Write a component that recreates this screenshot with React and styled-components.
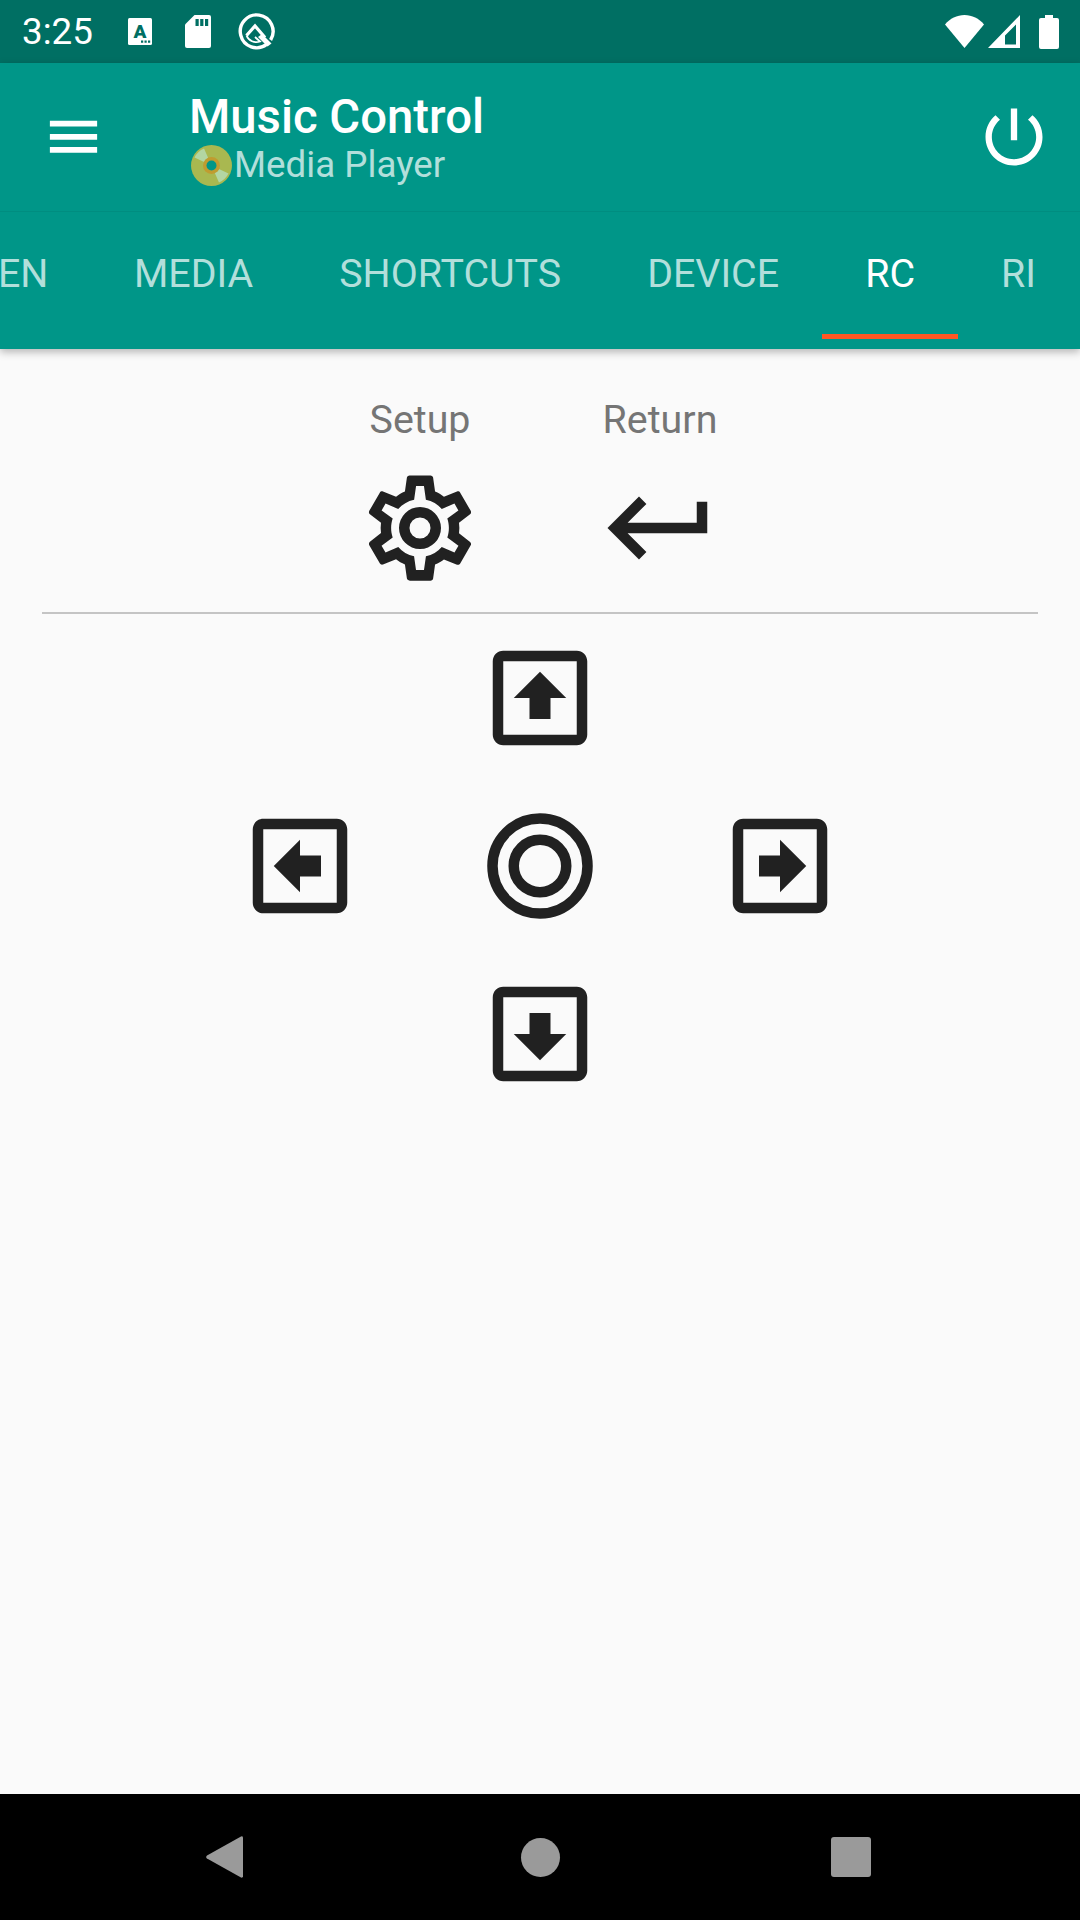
import styled, { createGlobalStyle } from "styled-components";

const TABS = ["EN", "MEDIA", "SHORTCUTS", "DEVICE", "RC", "RI"];

const ARROW_UP =
  "M12 7L7 12H10V16H14V12H17L12 7ZM19 3H5C3.89 3 3 3.89 3 5V19C3 20.1 3.9 21 5 21H19C20.1 21 21 20.1 21 19V5C21 3.89 20.1 3 19 3ZM19 19H5V5H19V19Z";
const ARROW_DOWN =
  "M12 17L17 12H14V8H10V12H7L12 17ZM19 3H5C3.89 3 3 3.89 3 5V19C3 20.1 3.9 21 5 21H19C20.1 21 21 20.1 21 19V5C21 3.89 20.1 3 19 3ZM19 19H5V5H19V19Z";
const ARROW_LEFT =
  "M7 12L12 17V14H16V10H12V7L7 12ZM19 3H5C3.89 3 3 3.89 3 5V19C3 20.1 3.9 21 5 21H19C20.1 21 21 20.1 21 19V5C21 3.89 20.1 3 19 3ZM19 19H5V5H19V19Z";
const ARROW_RIGHT =
  "M17 12L12 7V10H8V14H12V17L17 12ZM19 3H5C3.89 3 3 3.89 3 5V19C3 20.1 3.9 21 5 21H19C20.1 21 21 20.1 21 19V5C21 3.89 20.1 3 19 3ZM19 19H5V5H19V19Z";
const GEAR =
  "M12,8A4,4 0 0,1 16,12A4,4 0 0,1 12,16A4,4 0 0,1 8,12A4,4 0 0,1 12,8M12,10A2,2 0 0,0 10,12A2,2 0 0,0 12,14A2,2 0 0,0 14,12A2,2 0 0,0 12,10M10,22C9.75,22 9.54,21.82 9.5,21.58L9.13,18.93C8.5,18.68 7.96,18.34 7.44,17.94L4.95,18.95C4.73,19.03 4.46,18.95 4.34,18.73L2.34,15.27C2.21,15.05 2.27,14.78 2.46,14.63L4.57,12.97L4.5,12L4.57,11L2.46,9.37C2.27,9.22 2.21,8.95 2.34,8.73L4.34,5.27C4.46,5.05 4.73,4.96 4.95,5.05L7.44,6.05C7.96,5.66 8.5,5.32 9.13,5.07L9.5,2.42C9.54,2.18 9.75,2 10,2H14C14.25,2 14.46,2.18 14.5,2.42L14.87,5.07C15.5,5.32 16.04,5.66 16.56,6.05L19.05,5.05C19.27,4.96 19.54,5.05 19.66,5.27L21.66,8.73C21.79,8.95 21.73,9.22 21.54,9.37L19.43,11L19.5,12L19.43,13L21.54,14.66C21.73,14.81 21.79,15.08 21.66,15.3L19.66,18.76C19.54,18.98 19.27,19.07 19.05,18.98L16.56,17.98C16.04,18.37 15.5,18.71 14.87,18.96L14.5,21.61C14.46,21.85 14.25,22.03 14,22.03H10M11.25,4L10.88,6.61C9.68,6.86 8.62,7.5 7.85,8.39L5.44,7.35L4.69,8.65L6.8,10.2C6.4,11.37 6.4,12.64 6.8,13.8L4.68,15.36L5.43,16.66L7.86,15.62C8.63,16.5 9.68,17.14 10.87,17.38L11.24,20H12.76L13.13,17.39C14.32,17.14 15.37,16.5 16.14,15.62L18.57,16.66L19.32,15.36L17.2,13.81C17.6,12.64 17.6,11.37 17.2,10.2L19.31,8.65L18.56,7.35L16.15,8.39C15.38,7.5 14.32,6.86 13.12,6.62L12.75,4H11.25Z";
const RETURN_KEY = "M19 7V11H5.83L9.41 7.41L8 6L2 12L8 18L9.41 16.58L5.83 13H21V7H19Z";
const POWER =
  "M13 3h-2v10h2V3zm4.83 2.17l-1.42 1.42C17.99 7.86 19 9.81 19 12c0 3.87-3.13 7-7 7s-7-3.13-7-7c0-2.19 1.01-4.14 2.58-5.42L6.17 5.17C4.23 6.82 3 9.26 3 12c0 4.97 4.03 9 9 9s9-4.03 9-9c0-2.74-1.23-5.18-3.17-6.83z";

export default function App() {
  return (
    <Page>
      <GlobalStyle />
      <StatusBar>
        <Time>3:25</Time>
        <StatusIcon $gap={36} width="24" height="27" viewBox="0 0 24 27">
          <rect width="24" height="27" rx="1.5" fill="#fff" />
          <text x="12" y="20" textAnchor="middle" fontFamily="Roboto" fontWeight="900" fontSize="19" fill="#006f63">
            A
          </text>
          <path d="M13 22.5h2.2v2.2H13zM16.5 22.5h2.2v2.2h-2.2zM20 22.5h2.2v2.2H20z" fill="#006f63" />
        </StatusIcon>
        <StatusIcon $gap={33} width="26" height="33" viewBox="0 0 26 33">
          <path
            d="M9.5 0H24a2 2 0 0 1 2 2v29a2 2 0 0 1-2 2H2a2 2 0 0 1-2-2V9.5Z"
            fill="#fff"
          />
          <path d="M10.5 4h3.2v7h-3.2zM15.2 4h3.2v7h-3.2zM20 4h3.2v7H20z" fill="#006f63" />
        </StatusIcon>
        <StatusIcon $gap={27} width="37" height="37" viewBox="0 0 37 37">
          <path
            d="M28.6 31.4A16.4 16.4 0 1 1 32.6 27"
            fill="none"
            stroke="#fff"
            strokeWidth="3.4"
          />
          <path d="M8.5 22.5L17 13l10 11.5" fill="none" stroke="#fff" strokeWidth="3.2" />
          <path d="M8.5 22.5A10.5 10.5 0 0 0 22 28.5L17 24" fill="none" stroke="#fff" strokeWidth="1.8" />
          <path d="M20 24l9.5 9.5 4-3L24 21Z" fill="#fff" />
        </StatusIcon>
        <StatusRight>
          <svg width="39" height="33" viewBox="0 0 39 33">
            <path d="M19.5 33L0 9.5C5 3.5 12 0 19.5 0S34 3.5 39 9.5Z" fill="#fff" />
          </svg>
          <svg width="32" height="33" viewBox="0 0 32 33">
            <path d="M0 33L32 0V33Z M17 29.5H28V9.5L17 20.5Z" fill="#fff" fillRule="evenodd" />
          </svg>
          <Battery width="20" height="34" viewBox="0 0 20 34">
            <path
              d="M6 0H14V3H18A2 2 0 0 1 20 5V32A2 2 0 0 1 18 34H2A2 2 0 0 1 0 32V5A2 2 0 0 1 2 3H6Z"
              fill="#fff"
            />
          </Battery>
        </StatusRight>
      </StatusBar>

      <AppBar>
        <Toolbar>
          <MenuIcon width="63" height="63" viewBox="0 0 24 24">
            <path d="M3 6H21V8.2H3ZM3 11H21V13.2H3ZM3 16H21V18.2H3Z" fill="#fff" />
          </MenuIcon>
          <Titles>
            <Title>Music Control</Title>
            <Subtitle>
              <svg width="41" height="41" viewBox="0 0 41 41">
                <circle cx="20.5" cy="20.5" r="20.5" fill="#a9b850" />
                <path d="M13 3.5L20.5 20.5 3.5 12.5A19 19 0 0 1 13 3.5Z" fill="#b3d6a3" />
                <path d="M28 37.5L20.5 20.5 37.5 28.5A19 19 0 0 1 28 37.5Z" fill="#b3d6a3" />
                <circle cx="20.5" cy="20.5" r="8.5" fill="#c09c30" />
                <circle cx="20.5" cy="20.5" r="5" fill="#009688" />
              </svg>
              <span>Media Player</span>
            </Subtitle>
          </Titles>
          <PowerIcon width="76" height="76" viewBox="0 0 24 24">
            <path d={POWER} fill="#fff" />
          </PowerIcon>
        </Toolbar>
        <TabStrip>
          {TABS.map((tab, i) => (
            <Tab key={tab} $active={tab === "RC"} $first={i === 0}>
              {tab}
            </Tab>
          ))}
        </TabStrip>
      </AppBar>

      <Content>
        <KeyRow>
          <KeyLabel>Setup</KeyLabel>
          <KeyLabel>Return</KeyLabel>
          <KeyIcon viewBox="0 0 24 24">
            <path d={GEAR} />
          </KeyIcon>
          <KeyIcon viewBox="0 0 24 24">
            <path d={RETURN_KEY} />
          </KeyIcon>
        </KeyRow>
        <Divider />
        <Pad>
          <PadCell $col={2}>
            <KeyIcon viewBox="0 0 24 24">
              <path d={ARROW_UP} fillRule="evenodd" />
            </KeyIcon>
          </PadCell>
          <PadCell $col={1}>
            <KeyIcon viewBox="0 0 24 24">
              <path d={ARROW_LEFT} fillRule="evenodd" />
            </KeyIcon>
          </PadCell>
          <PadCell $col={2}>
            <KeyIcon viewBox="0 0 24 24">
              <circle cx="12" cy="12" r="9.05" fill="none" stroke="#212121" strokeWidth="2" />
              <circle cx="12" cy="12" r="5" fill="none" stroke="#212121" strokeWidth="2" />
            </KeyIcon>
          </PadCell>
          <PadCell $col={3}>
            <KeyIcon viewBox="0 0 24 24">
              <path d={ARROW_RIGHT} fillRule="evenodd" />
            </KeyIcon>
          </PadCell>
          <PadCell $col={2}>
            <KeyIcon viewBox="0 0 24 24">
              <path d={ARROW_DOWN} fillRule="evenodd" />
            </KeyIcon>
          </PadCell>
        </Pad>
      </Content>

      <NavBar>
        <svg width="43" height="42" viewBox="0 0 43 42">
          <path d="M35 0.5a1.5 1.5 0 0 1 2 1.2V40.3a1.5 1.5 0 0 1-2 1.2L1 22.6a2 2 0 0 1 0-3.2Z" fill="#9a9a9a" />
        </svg>
        <HomeButton />
        <RecentsButton />
      </NavBar>
    </Page>
  );
}

const GlobalStyle = createGlobalStyle`
  html, body {
    margin: 0;
    padding: 0;
    background: #fafafa;
  }
  * {
    box-sizing: border-box;
  }
`;
const Page = styled.div`
  width: 1080px;
  height: 1920px;
  display: flex;
  flex-direction: column;
  overflow: hidden;
  background: #fafafa;
  font-family: Roboto, sans-serif;
`;
const StatusBar = styled.div`
  height: 63px;
  flex: none;
  display: flex;
  align-items: center;
  padding: 0 21px 0 22px;
  background: #006f63;
  color: #fff;
`;
const Time = styled.span`
  font-size: 36.75px;
  line-height: 65px;
  width: 70px;
`;
const StatusIcon = styled.svg`
  margin-left: ${(p) => p.$gap}px;
  flex: none;
`;
const StatusRight = styled.div`
  margin-left: auto;
  display: flex;
  align-items: center;
  gap: 4px;
`;
const Battery = styled.svg`
  margin-left: 15px;
`;
const AppBar = styled.div`
  flex: none;
  background: #009688;
  box-shadow: 0 3px 8px rgba(0, 0, 0, 0.28);
  position: relative;
`;
const Toolbar = styled.div`
  height: 149px;
  display: flex;
  align-items: center;
  padding: 0 28px 0 42px;
  border-bottom: 1px solid #008d80;
`;
const MenuIcon = styled.svg`
  flex: none;
  margin-top: -1px;
`;
const Titles = styled.div`
  margin-left: 84px;
  flex: 1;
  display: flex;
  flex-direction: column;
`;
const Title = styled.div`
  font-size: 47.25px;
  font-weight: 500;
  line-height: 56px;
  color: #fff;
`;
const Subtitle = styled.div`
  display: flex;
  align-items: center;
  gap: 2px;
  height: 40px;
  font-size: 36.75px;
  line-height: 40px;
  color: #b2dfdb;
  margin-left: 2px;
`;
const PowerIcon = styled.svg`
  flex: none;
`;
const TabStrip = styled.div`
  height: 137px;
  display: flex;
  align-items: flex-start;
  overflow: hidden;
  font-size: 39.375px;
`;
const Tab = styled.div`
  height: 127px;
  display: flex;
  align-items: center;
  justify-content: center;
  flex: none;
  padding: 0 ${(p) => (p.$first ? "42.5px 0 0" : "43px")};
  margin-left: ${(p) => (p.$first ? "-2px" : "0")};
  min-width: ${(p) => (p.$active ? "136px" : "0")};
  color: ${(p) => (p.$active ? "#fff" : "#b2dfdb")};
  border-bottom: 5px solid ${(p) => (p.$active ? "#ff5722" : "transparent")};
`;
const Content = styled.div`
  flex: 1;
  display: flex;
  flex-direction: column;
  align-items: center;
`;
const KeyRow = styled.div`
  display: grid;
  grid-template-columns: 126px 126px;
  column-gap: 114px;
  row-gap: 23px;
  justify-items: center;
  padding-top: 49px;
`;
const KeyLabel = styled.div`
  font-size: 39.375px;
  line-height: 44px;
  color: #757575;
`;
const KeyIcon = styled.svg`
  display: block;
  width: 126px;
  height: 126px;
  fill: #212121;
`;
const Divider = styled.div`
  width: 996px;
  height: 2px;
  margin-top: 21px;
  background: #c4c4c4;
`;
const Pad = styled.div`
  display: grid;
  grid-template-columns: 126px 126px 126px;
  column-gap: 114px;
  row-gap: 42px;
  margin-top: 21px;
`;
const PadCell = styled.div`
  grid-column: ${(p) => p.$col};
`;
const NavBar = styled.div`
  height: 126px;
  flex: none;
  display: flex;
  align-items: center;
  justify-content: space-between;
  padding: 0 209px 0 206px;
  background: #000;
`;
const HomeButton = styled.div`
  width: 39px;
  height: 39px;
  border-radius: 50%;
  background: #9a9a9a;
`;
const RecentsButton = styled.div`
  width: 40px;
  height: 40px;
  border-radius: 3px;
  background: #9a9a9a;
`;
